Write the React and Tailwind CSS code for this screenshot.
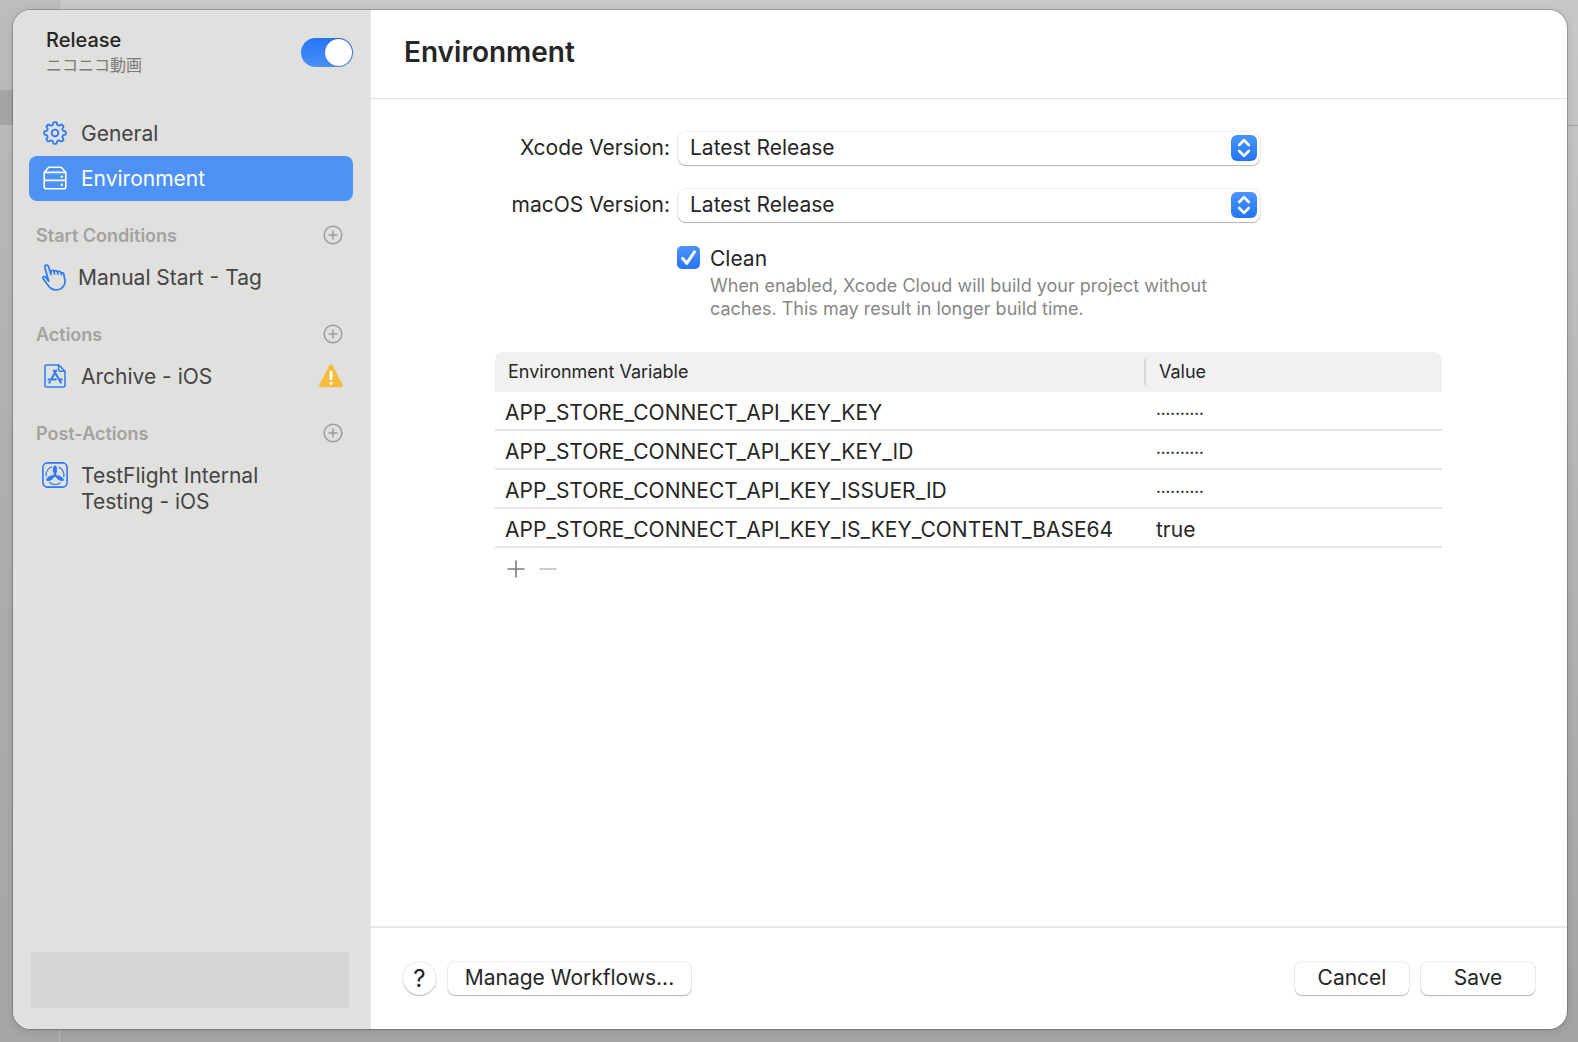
import React from "react";

const gearPath = (() => {
  const steps = 192;
  const points = [];
  for (let i = 0; i < steps; i++) {
    const a = (i / steps) * Math.PI * 2;
    const r = 9.6 + 1.3 * Math.tanh(2.4 * Math.cos(8 * a));
    points.push(`${(12 + r * Math.sin(a)).toFixed(2)} ${(12 - r * Math.cos(a)).toFixed(2)}`);
  }
  return `M${points.join("L")}Z`;
})();

function GearIcon() {
  return (
    <svg viewBox="0 0 24 24" className="size-6" fill="none" stroke="currentColor" strokeWidth="1.8" strokeLinejoin="round" aria-hidden="true">
      <path d={gearPath} />
      <circle cx="12" cy="12" r="3.3" />
    </svg>
  );
}

function DriveIcon() {
  return (
    <svg viewBox="0 0 24 24" className="size-6" fill="none" stroke="currentColor" strokeWidth="1.6" strokeLinejoin="round" aria-hidden="true">
      <path d="M1.2 6.4 5 1.9Q5.5 1.2 6.4 1.2h11.2q.9 0 1.4.7l3.8 4.5" />
      <path d="M1.2 6.4h21.6v14.4q0 2-2 2H3.2q-2 0-2-2zM1.2 14.4h21.6" />
      <circle cx="18.8" cy="10.8" r="1.2" fill="currentColor" stroke="none" />
      <circle cx="18.8" cy="18.8" r="1.2" fill="currentColor" stroke="none" />
    </svg>
  );
}

function HandIcon() {
  return (
    <svg viewBox="0 0 24 27" className="h-[27px] w-6" fill="none" stroke="currentColor" strokeWidth="1.7" strokeLinecap="round" strokeLinejoin="round" aria-hidden="true">
      <path d="M6.7 17.2 2.9 3.4C2.3 1 5.7.1 6.5 2.5L9 10.6V7.6C9 5.7 11.6 5.9 12 7.6L12.6 10M12.1 8c.2-2 2.9-1.7 3.3 0l.6 2.2M15.5 8.5c.3-1.7 2.7-1.5 3.3 0l.7 2.1M19 9c1.3-1 2.5 0 2.8 1.3l1 5.2c1 5-2 9-6 10-4.5 1-8.5-.7-11-4.5L1.2 14.8c-1-1.7 1-3 2.4-1.7L6.7 17.2" />
    </svg>
  );
}

function ArchiveIcon() {
  return (
    <svg viewBox="0 0 22 24" className="h-6 w-[22px]" fill="none" stroke="currentColor" strokeWidth="1.5" strokeLinecap="round" strokeLinejoin="round" aria-hidden="true">
      <path d="M2.6 1h12.2L21 7.2v14.2q0 1.6-1.6 1.6H2.6Q1 23 1 21.4V2.6Q1 1 2.6 1z" />
      <path d="M14.6 1.2v4.6q0 1.4 1.4 1.4h4.8" />
      <g strokeWidth="2">
        <path d="M9.8 6.6l7 12M12.2 6.6L7.1 15.4M4.5 15.5h7.3M15.2 15.5h2.6M5.9 17.7l-.6 1" />
      </g>
    </svg>
  );
}

function TestFlightIcon() {
  return (
    <svg viewBox="0 0 26 26" className="size-[26px]" fill="none" stroke="currentColor" strokeWidth="1.6" aria-hidden="true">
      <rect x=".9" y=".9" width="24.2" height="24.2" rx="4.5" />
      {[0, 120, 240].map((angle) => (
        <g key={angle} transform={`rotate(${angle} 13 13.4)`}>
          <path d="M13 13.4C10.6 10.5 10.5 6.5 11.6 4.4Q13 2.4 14.4 4.4C15.5 6.5 15.4 10.5 13 13.4z" fill="currentColor" stroke="none" />
          <path d="M16.6 5.1A9 9 0 0 1 21.8 15" strokeWidth="1.3" />
        </g>
      ))}
      <circle cx="13" cy="13.4" r="1.6" fill="currentColor" stroke="none" />
    </svg>
  );
}

function WarningIcon() {
  return (
    <svg viewBox="0 0 24 24" className="size-6" role="img" aria-label="Warning">
      <path d="M10.3 1.6q1.7-2.4 3.4 0l9.7 18.6q1.3 2.9-1.7 3H2.3q-3-.1-1.7-3z" fill="#f8bc3d" />
      <path d="M12 8v7" stroke="#fff" strokeWidth="2.8" strokeLinecap="round" />
      <circle cx="12" cy="19.3" r="1.6" fill="#fff" />
    </svg>
  );
}

function NavItem({ icon, label, selected, narrowIcon, trailing }) {
  return (
    <a
      href="#"
      aria-current={selected ? "page" : undefined}
      className={
        selected
          ? "flex items-start rounded-lg bg-[#4e92f6] pt-[10px] pr-[10px] pb-[9px] pl-3 text-white"
          : "flex items-start pt-[10px] pr-[10px] pb-[9px] pl-3 text-[#454544]"
      }
    >
      <span
        className={`flex h-6 shrink-0 items-center justify-center ${narrowIcon ? "w-[25px]" : "w-7"} ${selected ? "" : "text-[#2c7af5]"}`}
      >
        {icon}
      </span>
      <span className="ml-3 min-w-0 flex-1 text-[21px] leading-[26px]">{label}</span>
      {trailing}
    </a>
  );
}

function Section({ title, children }) {
  return (
    <section className="mt-[19px]">
      <div className="mb-[5px] flex h-[30px] items-center justify-between pr-[10px] pl-[7px]">
        <h2 className="text-[18px] font-semibold text-[#a2a2a1]">{title}</h2>
        <button type="button" aria-label={`Add to ${title}`} className="text-[#9b9b9a]">
          <svg viewBox="0 0 20 20" className="size-5" fill="none" stroke="currentColor" strokeWidth="1.5" strokeLinecap="round">
            <circle cx="10" cy="10" r="8.8" />
            <path d="M10 6v8M6 10h8" />
          </svg>
        </button>
      </div>
      {children}
    </section>
  );
}

function VersionSelect({ id, label }) {
  return (
    <div className="grid grid-cols-[175px_1fr] items-center gap-2">
      <label htmlFor={id} className="pb-0.5 text-right text-[21px] leading-[31px] whitespace-nowrap">{label}</label>
      <div className="relative">
        <select id={id} className="block h-[33px] w-full appearance-none rounded-lg bg-white px-3 pb-px text-[21px] leading-8 shadow-[0_0_1px_1px_rgba(0,0,0,0.07),0_1px_1px_rgba(0,0,0,0.25)]">
          <option>Latest Release</option>
        </select>
        <span className="pointer-events-none absolute top-[3px] right-[3px] flex size-[26px] items-center justify-center rounded-md bg-linear-to-b from-[#4a94fb] to-[#2474f4]">
          <svg viewBox="0 0 26 26" className="size-[26px]" fill="none" stroke="#fff" strokeWidth="2.6" strokeLinecap="round" strokeLinejoin="round" aria-hidden="true">
            <path d="M8.2 10 13 5.2 17.8 10M8.2 16 13 20.8 17.8 16" />
          </svg>
        </span>
      </div>
    </div>
  );
}

const variables = [
  ["APP_STORE_CONNECT_API_KEY_KEY", null],
  ["APP_STORE_CONNECT_API_KEY_KEY_ID", null],
  ["APP_STORE_CONNECT_API_KEY_ISSUER_ID", null],
  ["APP_STORE_CONNECT_API_KEY_IS_KEY_CONTENT_BASE64", "true"],
];

const pushButton =
  "h-[33px] rounded-[7px] bg-white pb-0.5 text-[21px] leading-[31px] shadow-[0_0_1px_1px_rgba(0,0,0,0.07),0_1px_1px_rgba(0,0,0,0.25)]";

export default function App() {
  return (
    <div className="relative isolate flex min-h-screen bg-linear-to-b from-[#c8c8c8] via-[#b4b4b4] to-[#a3a3a3] pt-[10px] pr-[11px] pb-[13px] pl-[13px] font-['Inter','Noto_Sans_CJK_JP',sans-serif] text-[#262626]">
      <div className="absolute inset-y-0 left-0 -z-10 w-[60px] border-r border-[#b5b5b5] bg-linear-to-b from-[#bdbdbd] via-[#aeaeae] to-[#a5a5a5] pt-[90px]">
        <div className="h-[35px] bg-[#a5a5a5]" />
      </div>
      <div className="absolute top-[125px] right-0 -z-10 h-px w-3 bg-[#a5a5a5]" />

      <div className="flex min-w-0 flex-1 overflow-hidden rounded-[18px] bg-white shadow-[0_0_0_1px_rgba(0,0,0,0.2),0_2px_8px_rgba(0,0,0,0.12)]">
        <aside className="flex w-[358px] shrink-0 flex-col border-r-2 border-[#e4e4e4] bg-[#e0e0de]">
          <div className="flex items-start justify-between pt-[17px] pr-4 pl-[33px]">
            <div>
              <h2 className="text-[20px] leading-[26px] font-medium">Release</h2>
              <p className="text-[16px] leading-6 text-[#7b7b7a]">ニコニコ動画</p>
            </div>
            <span className="relative mt-[11px] block h-[29px] w-[52px]">
              <input type="checkbox" role="switch" aria-label="Workflow enabled" defaultChecked className="block h-full w-full appearance-none rounded-full bg-linear-to-b from-[#2474f4] to-[#4a90f8]" />
              <span className="pointer-events-none absolute top-px right-px size-[27px] rounded-full bg-white shadow-[0_0_2px_rgba(0,0,0,0.3)]" />
            </span>
          </div>

          <nav className="mt-[34px] pr-4 pl-4">
            <NavItem icon={<GearIcon />} label="General" />
            <NavItem icon={<DriveIcon />} label="Environment" selected />
            <Section title="Start Conditions">
              <NavItem icon={<HandIcon />} label="Manual Start - Tag" narrowIcon />
            </Section>
            <Section title="Actions">
              <NavItem icon={<ArchiveIcon />} label="Archive - iOS" trailing={<WarningIcon />} />
            </Section>
            <Section title="Post-Actions">
              <NavItem icon={<TestFlightIcon />} label={<>TestFlight Internal<br />Testing - iOS</>} />
            </Section>
          </nav>

          <div className="mt-auto mr-5 mb-[21px] ml-[18px] h-14 bg-[#d6d6d6]" />
        </aside>

        <main className="flex min-w-0 flex-1 flex-col">
          <header className="flex h-[89px] items-center border-b border-[#e2e2e2] px-[33px] pb-[5px]">
            <h1 className="text-[28px] leading-9 font-semibold">Environment</h1>
          </header>

          <div className="flex-1 pt-[33px] pr-[125px] pl-[124px]">
            <form className="mr-[182px]">
              <div className="flex flex-col gap-6">
                <VersionSelect id="xcode-version" label="Xcode Version:" />
                <VersionSelect id="macos-version" label="macOS Version:" />
              </div>
              <div className="mt-[23px] ml-[182px] flex items-start">
                <span className="relative mt-px block size-[23px] shrink-0">
                  <input id="clean" type="checkbox" defaultChecked aria-describedby="clean-help" className="block size-[23px] appearance-none rounded-[5px] bg-linear-to-b from-[#4a94fb] to-[#2474f4]" />
                  <svg viewBox="0 0 23 23" className="pointer-events-none absolute inset-0 size-[23px]" fill="none" stroke="#fff" strokeWidth="3" strokeLinecap="round" strokeLinejoin="round" aria-hidden="true">
                    <path d="M5.6 12.4 9.7 17.3 17.4 6" />
                  </svg>
                </span>
                <div className="ml-[10px]">
                  <label htmlFor="clean" className="block pb-px text-[21px] leading-[28px]">Clean</label>
                  <p id="clean-help" className="text-[18px] leading-[23px] text-[#878787]">
                    When enabled, Xcode Cloud will build your project without
                    <br />
                    caches. This may result in longer build time.
                  </p>
                </div>
              </div>
            </form>

            <table className="mt-8 w-full table-fixed border-separate border-spacing-0 text-left">
              <thead>
                <tr className="h-10 bg-[#f1f1f1] text-[18px]">
                  <th scope="col" className="w-[651px] rounded-tl-lg p-0 pl-[13px] font-normal">
                    <div className="flex h-[26px] items-center border-r-2 border-[#dadada] pb-0.5">Environment Variable</div>
                  </th>
                  <th scope="col" className="rounded-tr-lg p-0 pb-0.5 pl-[13px] font-normal">Value</th>
                </tr>
              </thead>
              <tbody>
                {variables.map(([name, value]) => (
                  <tr key={name} className="h-[39px] text-[21px] leading-7">
                    <td className="border-b-2 border-[#e5e5e5] p-0 pt-1 pl-[10px]">{name}</td>
                    <td className="border-b-2 border-[#e5e5e5] p-0 pt-1 pl-[10px]">
                      {value ?? <span className="text-[15px] font-semibold">··········</span>}
                    </td>
                  </tr>
                ))}
              </tbody>
            </table>
            <div className="mt-3 ml-3 flex gap-[14px]">
              <button type="button" aria-label="Add variable" className="text-[#7c7c7c]">
                <svg viewBox="0 0 18 18" className="size-[18px]" stroke="currentColor" strokeWidth="1.6" strokeLinecap="round"><path d="M9 1v16M1 9h16" /></svg>
              </button>
              <button type="button" aria-label="Remove variable" disabled className="text-[#bcbcbc]">
                <svg viewBox="0 0 18 18" className="size-[18px]" stroke="currentColor" strokeWidth="1.6" strokeLinecap="round"><path d="M1 9h16" /></svg>
              </button>
            </div>
          </div>

          <footer className="flex h-[103px] items-center gap-3 border-t-2 border-[#e9e9e9] px-8">
            <button type="button" aria-label="Help" className="size-[33px] rounded-full bg-white text-[24px] leading-8 shadow-[0_0_1px_1px_rgba(0,0,0,0.07),0_1px_1px_rgba(0,0,0,0.25)]">?</button>
            <button type="button" className={`${pushButton} w-[243px]`}>Manage Workflows...</button>
            <button type="button" className={`${pushButton} ml-auto w-[114px]`}>Cancel</button>
            <button type="button" className={`${pushButton} w-[114px]`}>Save</button>
          </footer>
        </main>
      </div>
    </div>
  );
}
